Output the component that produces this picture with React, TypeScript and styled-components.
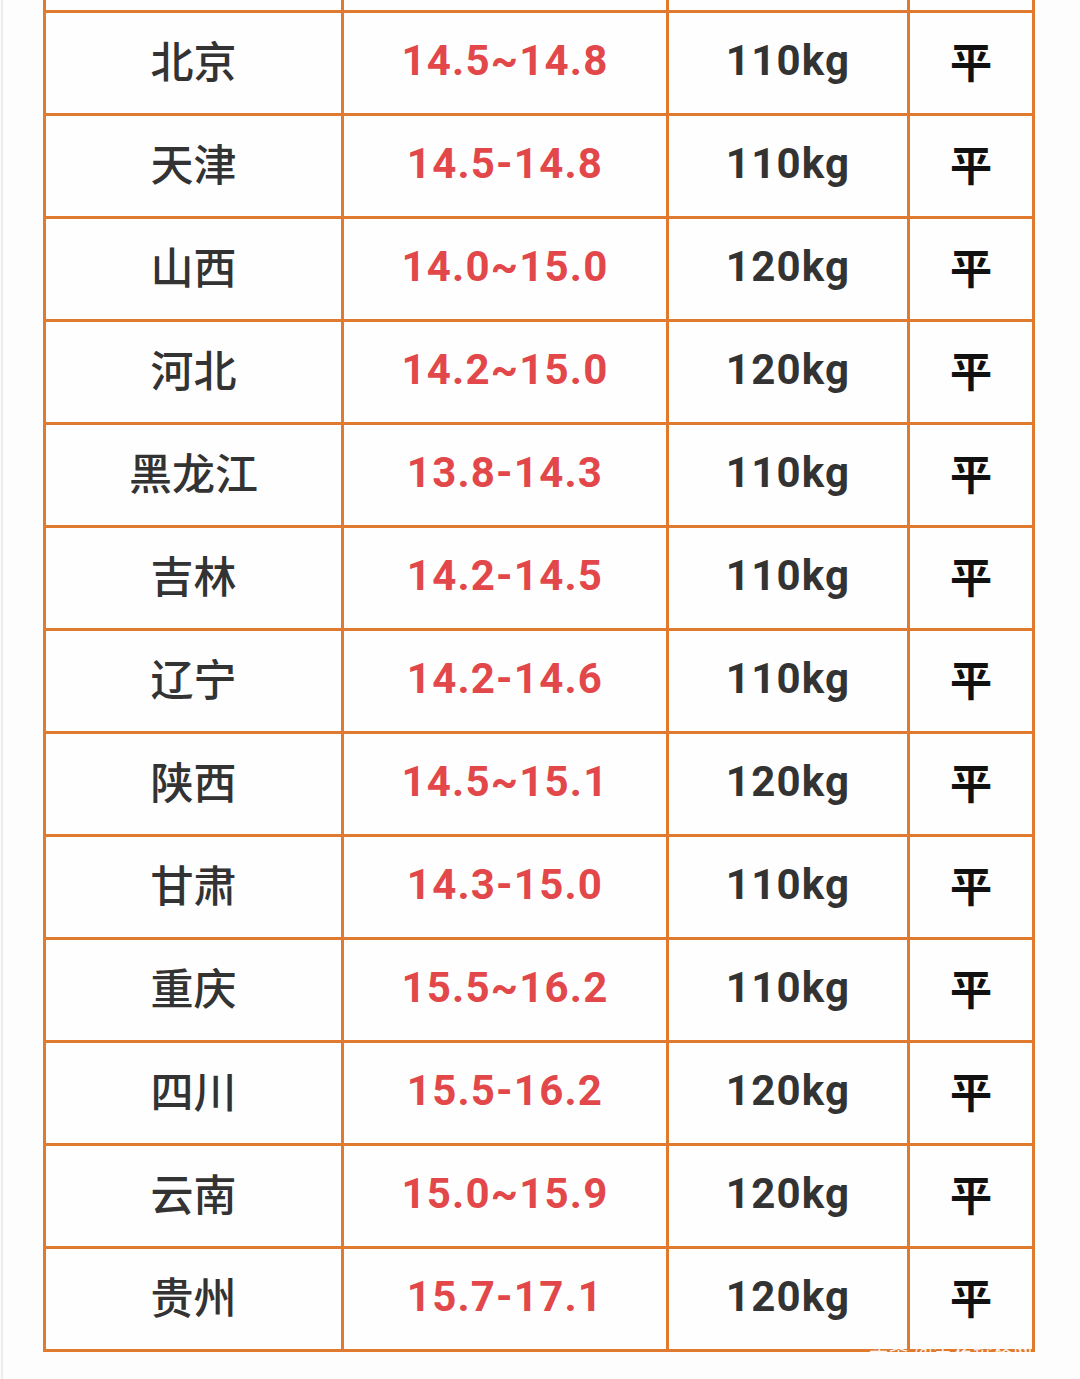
import styled, { createGlobalStyle } from 'styled-components';

const GlobalStyle = createGlobalStyle`
  html, body {
    margin: 0;
    padding: 0;
    background: #fdfdfd;
  }
  body {
    font-family: Roboto, "Noto Sans CJK SC", sans-serif;
  }
`;

const Page = styled.div`
  position: relative;
  min-height: 1379px;
  border-left: 2px solid #ececec;
  margin-left: 1px;
  padding-left: 40px;
  box-sizing: border-box;
  background: #fdfdfd;
`;

const Grid = styled.div`
  display: grid;
  grid-template-columns: 295px 322px 238px 122px;
  grid-auto-rows: 100px;
  grid-template-rows: 10px;
  gap: 3px;
  width: max-content;
  padding: 0 3px 3px 3px;
  background: #e07a2e;
`;

type Kind = 'region' | 'price' | 'weight' | 'trend';

const Cell = styled.div<{ $kind: Kind }>`
  background: #fefefe;
  display: flex;
  align-items: center;
  justify-content: center;
  padding-bottom: ${p => (p.$kind === 'price' || p.$kind === 'weight' ? '6px' : '8px')};
  box-sizing: border-box;
  font-size: ${p => (p.$kind === 'region' ? '43px' : '42px')};
  letter-spacing: ${p => (p.$kind === 'price' || p.$kind === 'weight' ? '1.2px' : '0')};
  font-weight: ${p => (p.$kind === 'region' ? 500 : 700)};
  color: ${p =>
    p.$kind === 'price' ? '#e2474a' : p.$kind === 'trend' ? '#111' : '#333'};
  font-family: ${p =>
    p.$kind === 'price' || p.$kind === 'weight'
      ? 'Roboto, "Noto Sans CJK SC", sans-serif'
      : '"Noto Sans CJK SC", sans-serif'};
`;

const Stub = styled.div`
  background: #fefefe;
`;

const Watermark = styled.div`
  position: absolute;
  left: 866px;
  top: 1336px;
  font-family: "Noto Sans CJK SC", sans-serif;
  font-size: 19px;
  color: rgba(255, 255, 255, 0.92);
  letter-spacing: 1px;
`;

const rows = [
  ['北京', '14.5~14.8', '110kg'],
  ['天津', '14.5-14.8', '110kg'],
  ['山西', '14.0~15.0', '120kg'],
  ['河北', '14.2~15.0', '120kg'],
  ['黑龙江', '13.8-14.3', '110kg'],
  ['吉林', '14.2-14.5', '110kg'],
  ['辽宁', '14.2-14.6', '110kg'],
  ['陕西', '14.5~15.1', '120kg'],
  ['甘肃', '14.3-15.0', '110kg'],
  ['重庆', '15.5~16.2', '110kg'],
  ['四川', '15.5-16.2', '120kg'],
  ['云南', '15.0~15.9', '120kg'],
  ['贵州', '15.7-17.1', '120kg'],
];

export default function App() {
  return (
    <>
      <GlobalStyle />
      <Page>
        <Grid>
          <Stub />
          <Stub />
          <Stub />
          <Stub />
          {rows.map(([region, price, weight]) => [
            <Cell key={region} $kind="region">{region}</Cell>,
            <Cell key={region + 'p'} $kind="price">{price}</Cell>,
            <Cell key={region + 'w'} $kind="weight">{weight}</Cell>,
            <Cell key={region + 't'} $kind="trend">平</Cell>,
          ])}
        </Grid>
        <Watermark>头条 @生猪价格网</Watermark>
      </Page>
    </>
  );
}
